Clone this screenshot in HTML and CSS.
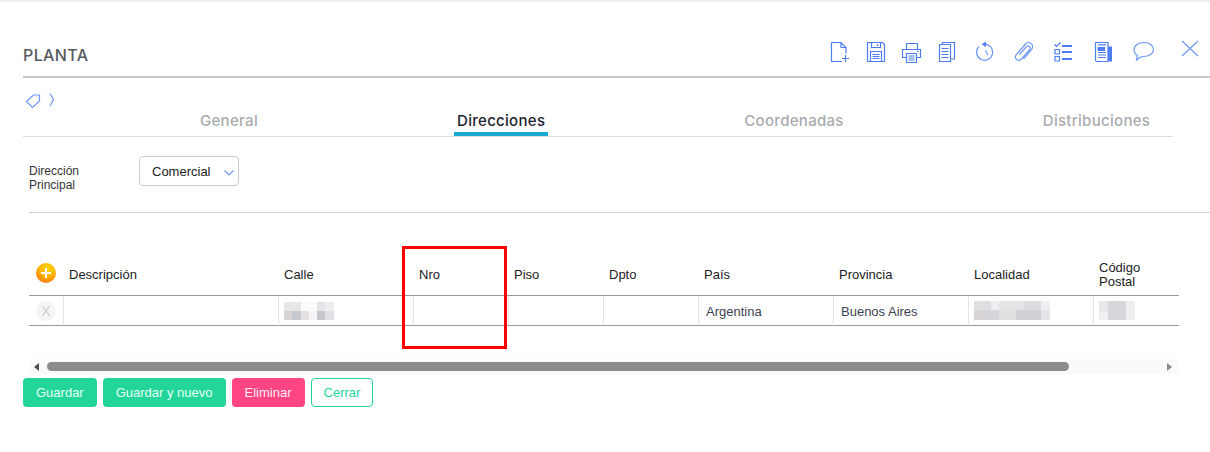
FILE: index.html
```html
<!DOCTYPE html>
<html lang="es">
<head>
<meta charset="utf-8">
<title>Planta</title>
<link rel="stylesheet" href="styles.css">
</head>
<body>
<div class="topshade"></div>
<header class="topbar">
  <h1 class="title">PLANTA</h1>
  <div class="tools">
    <span class="tool"><svg width="20" height="22" viewBox="0 0 20 22"><path d="M1.500 1.500H11L16 6.500V12.500M1.500 1.500V20.500H12M11 1.500V6.500H16M15.500 14V21M12 17.500H19"/></svg></span>
    <span class="tool"><svg width="20" height="22" viewBox="0 0 20 22"><path d="M1.500 1.500H16.500L18.500 3.500V20.500H1.500ZM5.500 1.500V6.500H14.500V1.500M4.500 10.500H15.500V20.500H4.500ZM6.500 13.500H13.500M6.500 15.500H13.500M6.500 17.500H13.500M11.500 3V5"/></svg></span>
    <span class="tool"><svg width="20" height="22" viewBox="0 0 20 22"><path d="M4.500 8V2.500H15.500V8M4.500 16.500H0.500V8.500H18.500V16.500H14.500M4.500 12.500H14.500V21.500H4.500ZM6.500 15H12.500M6.500 17H12.500M6.500 19H12.500M15 10.500H16.500"/></svg></span>
    <span class="tool"><svg width="20" height="22" viewBox="0 0 20 22"><path d="M1.500 3.500H12.500V20.500H1.500ZM4.500 3.500V1.500H16.500V18H12.500M3.500 7.500H10.500M3.500 10.500H10.500M3.500 13.500H10.500M3.500 16.500H10.500"/></svg></span>
    <span class="tool tool-wide"><svg width="20" height="22" viewBox="0 0 20 22"><path class="soft" d="M3 5.500A8 8 0 1 0 8 3.200M9.500 9.500L12 14"/><path class="solid" d="M5.500 3.200L10 0.500V6Z"/></svg></span>
    <span class="tool tool-clip"><svg width="20" height="22" viewBox="0 0 20 22"><path class="soft" d="M6.500 13.500L13.500 5.500A2.200 2.200 0 0 1 16.800 8.300L8 18.500A3.400 3.400 0 0 1 3 14L12.500 3A4 4 0 0 1 18.600 8.300L10.500 18"/></svg></span>
    <span class="tool tool-check"><svg width="20" height="22" viewBox="0 0 20 22"><path d="M1.500 3.500L3.500 5.500L7.500 1.500M2 8.500H6.500V13H2ZM2 15.500H6.500V20H2Z"/><path class="bar" d="M9 5H19M9 11H19M9 18H19"/></svg></span>
    <span class="tool tool-news"><svg width="20" height="22" viewBox="0 0 20 22"><path class="solid" d="M14 5.500H18V20.500H14Z"/><path d="M2 1.500H14V20.500H3A1.500 1.500 0 0 1 1.500 19V2ZM4 14H12M4 16.500H12M4 11.500H12M4 3.800H12"/><path class="solid" d="M3.500 6H11V10H3.500Z"/></svg></span>
    <span class="tool tool-chat"><svg width="22" height="22" viewBox="0 0 22 22"><path class="soft" d="M4.500 14.500C2 13 1 11 1 8.500C1 4.500 5.500 1.500 11 1.500S20.500 4.500 20.500 8.500S16 15.500 10.500 15.500L8 15.800L3.500 19Z"/></svg></span>
    <span class="tool tool-close"><svg width="18" height="18" viewBox="0 0 18 18"><path class="soft" d="M1 1L17 16M17 1L1 16"/></svg></span>
  </div>
</header>
<nav class="crumbs">
  <svg width="16" height="16" viewBox="0 0 16 16"><path class="soft" d="M1.500 8.500L8.500 2H14.500V8L7.500 14.500ZM11.500 4.500H12"/></svg>
  <svg class="crumb-sep" width="6" height="16" viewBox="0 0 6 16"><path class="soft" d="M1 1.500L4.500 7.500L1 14"/></svg>
</nav>
<div class="tabs">
  <a class="tab">General</a>
  <a class="tab tab-active">Direcciones</a>
  <a class="tab">Coordenadas</a>
  <a class="tab">Distribuciones</a>
</div>
<section class="form-row">
  <label class="form-label">Dirección Principal</label>
  <div class="select">
    <span>Comercial</span>
    <svg width="10" height="6" viewBox="0 0 10 6"><path class="soft" d="M0.500 0.500L5 5L9.500 0.500"/></svg>
  </div>
</section>
<main class="grid-wrap">
  <table class="grid">
    <colgroup>
      <col class="c-act"><col class="c-desc"><col class="c-wide"><col class="c-num"><col class="c-num"><col class="c-num"><col class="c-wide"><col class="c-wide"><col class="c-loc"><col class="c-cp">
    </colgroup>
    <thead>
      <tr>
        <th class="act-head"><span class="add"><svg width="10" height="10" viewBox="0 0 10 10"><path d="M5 0V10M0 5H10"/></svg></span></th>
        <th>Descripción</th>
        <th>Calle</th>
        <th>Nro</th>
        <th>Piso</th>
        <th>Dpto</th>
        <th>País</th>
        <th>Provincia</th>
        <th>Localidad</th>
        <th>Código Postal</th>
      </tr>
    </thead>
    <tbody>
      <tr>
        <td class="act"><span class="remove">X</span></td>
        <td></td>
        <td><svg class="blur" width="50" height="18" viewBox="0 0 50 18"><rect width="17" height="9" fill="#e9e6e8"/><rect x="17" width="16" height="9" fill="#fafafa"/><rect x="33" width="8" height="9" fill="#e4e4e8"/><rect x="41" width="9" height="9" fill="#eeeef1"/><rect y="9" width="8" height="9" fill="#d8d3d6"/><rect x="8" y="9" width="9" height="9" fill="#c8c8d0"/><rect x="17" y="9" width="8" height="9" fill="#e4e0e3"/><rect x="25" y="9" width="8" height="9" fill="#f5f5f6"/><rect x="33" y="9" width="8" height="9" fill="#c6c6cd"/><rect x="41" y="9" width="9" height="9" fill="#e0e0e6"/></svg></td>
        <td></td>
        <td></td>
        <td></td>
        <td><span class="val">Argentina</span></td>
        <td><span class="val">Buenos Aires</span></td>
        <td><svg class="blur" width="76" height="19" viewBox="0 0 76 19"><rect width="17" height="9" fill="#e0dfe2"/><rect x="17" width="8" height="9" fill="#eeeef1"/><rect x="25" width="25" height="9" fill="#e4e4e7"/><rect x="50" width="17" height="9" fill="#dcdcdf"/><rect x="67" width="9" height="9" fill="#f0f0f3"/><rect y="9" width="8" height="10" fill="#d8d3d5"/><rect x="8" y="9" width="17" height="10" fill="#d5d5da"/><rect x="25" y="9" width="17" height="10" fill="#e0e0e3"/><rect x="42" y="9" width="25" height="10" fill="#d0d0d5"/><rect x="67" y="9" width="9" height="10" fill="#e4e4e9"/></svg></td>
        <td><svg class="blur" width="36" height="19" viewBox="0 0 36 19"><rect width="9" height="10" fill="#e8e8ea"/><rect x="9" width="18" height="19" fill="#d8d6da"/><rect x="27" width="9" height="19" fill="#eeeef1"/><rect y="10" width="9" height="9" fill="#f0f0f2"/></svg></td>
      </tr>
    </tbody>
  </table>
  <div class="scrollbar">
    <span class="arrow arrow-left"></span>
    <div class="track"><div class="thumb"></div></div>
    <span class="arrow arrow-right"></span>
  </div>
</main>
<footer class="actions">
  <button class="btn btn-green">Guardar</button>
  <button class="btn btn-green">Guardar y nuevo</button>
  <button class="btn btn-pink">Eliminar</button>
  <button class="btn btn-outline">Cerrar</button>
</footer>
<div class="highlight"></div>
</body>
</html>
```
FILE: styles.css
```css
* { box-sizing: border-box; }
html, body { margin: 0; padding: 0; }
body {
  position: relative;
  height: 452px;
  overflow: hidden;
  background: #fff;
  font-family: "Liberation Sans", Arial, sans-serif;
  font-size: 13px;
  color: #222;
}
svg { display: block; fill: none; stroke: #4d7cf3; stroke-width: 1.2; }
svg .soft { stroke: #6f97f5; stroke-width: 1.2; }
svg .solid { fill: #4d7cf3; stroke: none; }
svg .bar { stroke-width: 2; }

.topshade { height: 2px; background: #f0f0f0; }
.topbar {
  display: flex;
  justify-content: space-between;
  align-items: flex-start;
  height: 76px;
  margin-left: 23px;
  padding-top: 38px;
  border-bottom: 2px solid #c9c9cd;
}
.title {
  margin: 0;
  font-family: "Inter", "Open Sans", sans-serif;
  font-size: 16px;
  font-weight: 500;
  line-height: 30px;
  letter-spacing: 0.4px;
  color: #555a60;
}
.tools { display: flex; align-items: flex-start; padding-top: 1px; padding-right: 10px; }
.tool { display: block; width: 36px; padding-left: 8px; }
.tool-wide { width: 40px; padding-left: 10px; }
.tool-clip { width: 40px; padding-left: 7px; }
.tool-check { width: 38px; padding-left: 7px; }
.tool-news { width: 40px; padding-left: 10px; }
.tool-chat { width: 49px; padding-left: 9px; }
.tool-close { width: 27px; padding-left: 8px; margin-top: -1px; }

.crumbs {
  display: flex;
  gap: 8px;
  height: 31px;
  margin-left: 25px;
  padding-top: 15px;
}
.crumb-sep { margin-top: -1px; }

.tabs {
  display: flex;
  gap: 193px;
  width: 1150px;
  height: 28px;
  margin-left: 23px;
  padding-left: 174px;
  border-bottom: 1px solid #dedede;
}
.tab {
  height: 27px;
  padding: 3px 3px 0;
  font-family: "Inter", "Open Sans", sans-serif;
  font-size: 15px;
  font-weight: 500;
  line-height: 18px;
  letter-spacing: 0.3px;
  white-space: nowrap;
  color: #a9abae;
}
.tab-active {
  color: #1e2230;
  border-bottom: 4px solid #1aa9d3;
}

.form-row {
  display: flex;
  height: 57px;
  margin-top: 19px;
  margin-left: 29px;
  border-bottom: 1px solid #d2d2d2;
}
.form-label {
  width: 110px;
  padding-top: 8px;
  padding-right: 40px;
  font-size: 12px;
  line-height: 14px;
  color: #333;
}
.select {
  display: flex;
  align-items: center;
  justify-content: space-between;
  width: 100px;
  height: 30px;
  padding: 0 4px 0 12px;
  border: 1px solid #ccc;
  border-radius: 4px;
  color: #222;
}
.select svg { margin-top: 3px; }

.grid-wrap { width: 1150px; margin-top: 40px; margin-left: 29px; }
.grid {
  width: 1150px;
  table-layout: fixed;
  border-collapse: separate;
  border-spacing: 0;
}
.c-act { width: 34px; }
.c-desc { width: 215px; }
.c-wide { width: 135px; }
.c-num { width: 95px; }
.c-loc { width: 125px; }
.c-cp { width: 86px; }
.grid th {
  height: 43px;
  padding: 2px 30px 0 6px;
  border-bottom: 1px solid #999;
  font-weight: 400;
  line-height: 14px;
  text-align: left;
  color: #222;
}
.grid th.act-head { padding: 0 0 3px 7px; }
.add {
  display: flex;
  align-items: center;
  justify-content: center;
  width: 20px;
  height: 20px;
  border-radius: 50%;
  background: radial-gradient(circle at 60% 25%, #ffd400 0%, #ffb300 45%, #ff5a1e 100%);
}
.add svg { stroke: #fff; stroke-width: 2; }
.grid td {
  height: 30px;
  padding: 0 0 0 5px;
  border-left: 1px solid #e4e4e4;
  border-bottom: 1px solid #999;
  color: #3d4252;
}
.grid td.act { padding: 0 0 0 7px; border-left: 0; }
.remove {
  display: flex;
  align-items: center;
  justify-content: center;
  width: 20px;
  height: 20px;
  border-radius: 50%;
  background: #f5f5f6;
  font-size: 14px;
  color: #cfcfd2;
}
.val { display: block; margin-top: 2px; padding-left: 2px; }
.blur { stroke: none; }

.scrollbar {
  display: flex;
  align-items: center;
  height: 15px;
  margin-top: 33px;
  background: #fafafa;
}
.arrow { display: block; width: 0; height: 0; border-top: 4px solid transparent; border-bottom: 4px solid transparent; }
.arrow-left { margin-left: 5px; border-right: 5px solid #505050; }
.arrow-right { margin-right: 7px; border-left: 5px solid #8a8a8a; }
.track { flex: 1; padding: 0 98px 0 8px; }
.thumb { height: 9px; border-radius: 5px; background: #8c8c8c; }

.actions { display: flex; gap: 6px; margin-top: 4px; margin-left: 23px; }
.btn {
  height: 29px;
  padding: 0 12px;
  border: 1px solid transparent;
  border-radius: 4px;
  font-family: "Liberation Sans", Arial, sans-serif;
  font-size: 13px;
  color: #e6fff6;
}
.btn-green { background: #22d69a; }
.btn-pink { background: #ff4583; color: #ffeef4; }
.btn-outline { background: #fff; border-color: #22d69a; color: #22d69a; }

.highlight {
  position: absolute;
  left: 402px;
  top: 246px;
  width: 105px;
  height: 103px;
  border: 3px solid #f00;
}
```
